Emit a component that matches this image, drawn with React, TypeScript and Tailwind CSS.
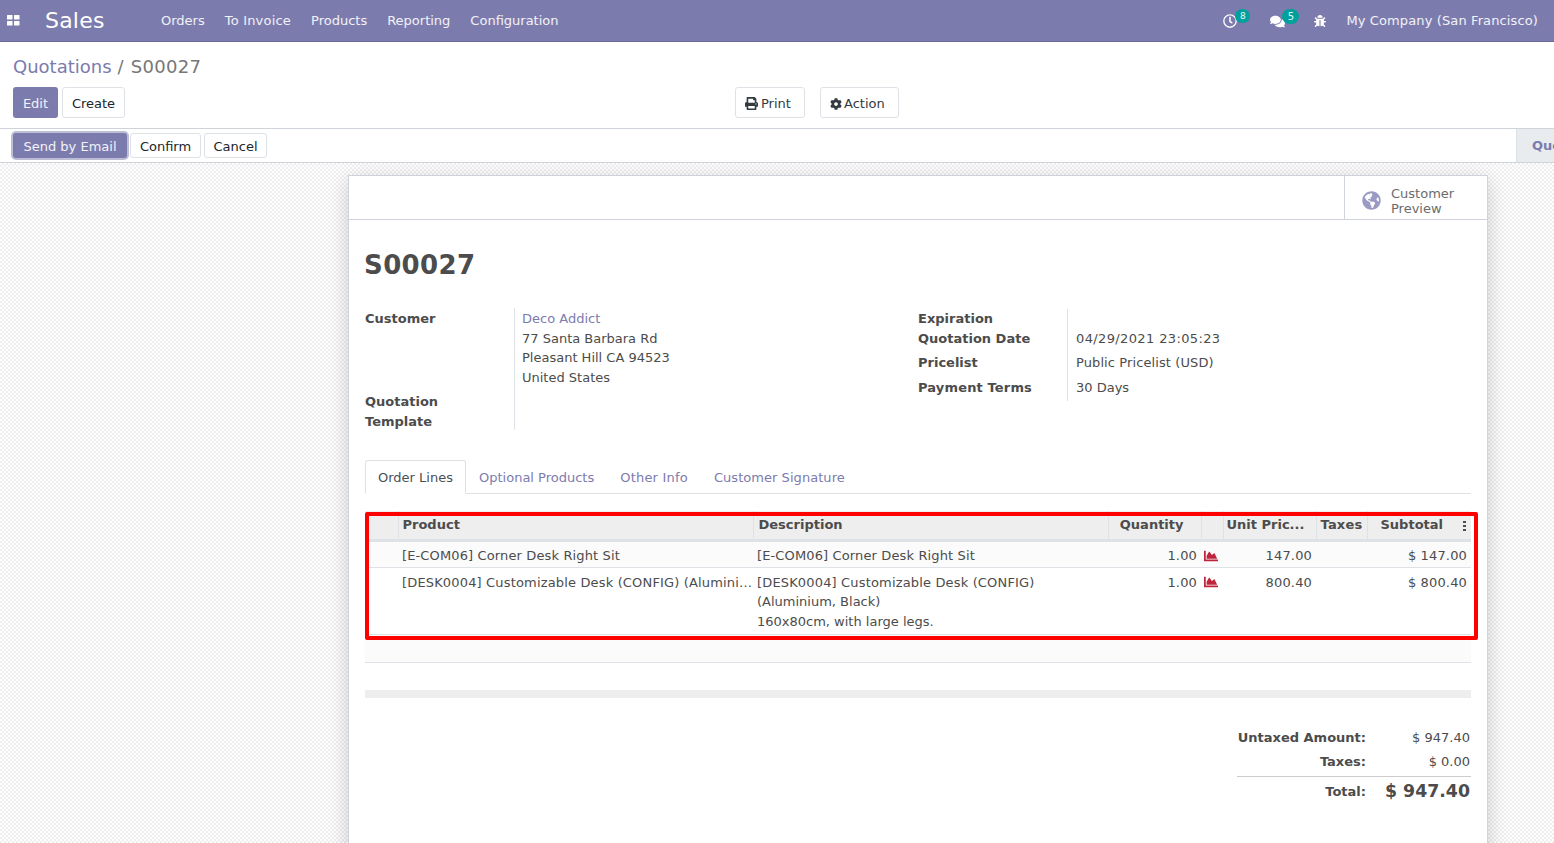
import { FaBug, FaChartArea, FaCog, FaComments, FaGlobeAmericas, FaPrint, FaRegClock } from "react-icons/fa";

const font = "font-['DejaVu_Sans',sans-serif]";

function TopBar() {
  return (
    <div className="h-[42px] bg-[#7c7bad] border-b border-[#6a699c] flex items-center text-white">
      <svg width="13" height="11" viewBox="0 0 13 11" className="ml-[7px]" fill="white">
        <rect x="0" y="0" width="5.500" height="4.500" rx="0.500" />
        <rect x="7" y="0" width="5.500" height="4.500" rx="0.500" />
        <rect x="0" y="6" width="5.500" height="4.500" rx="0.500" />
        <rect x="7" y="6" width="5.500" height="4.500" rx="0.500" />
      </svg>
      <span className="ml-[25px] w-[116px] text-[22px] leading-none tracking-[0.2px]">Sales</span>
      <div className="flex gap-5 text-[13px] text-white/90">
        <span>Orders</span>
        <span className="tracking-[0.2px]">To Invoice</span>
        <span>Products</span>
        <span>Reporting</span>
        <span>Configuration</span>
      </div>
      <div className="ml-auto flex items-center mr-[16px] text-[13px] text-white/90">
        <div className="relative w-[14px] h-[14px] mr-[33px]">
          <FaRegClock size={14} color="white" />
          <span className="absolute left-[12px] -top-[5px] w-[15px] h-[14px] rounded-full bg-[#00a09d] text-[9px] leading-[14px] text-center">8</span>
        </div>
        <div className="relative w-[15px] h-[14px] mr-[29px]">
          <FaComments size={15} color="white" />
          <span className="absolute left-[12px] -top-[5px] w-[17px] h-[15px] rounded-full bg-[#00a09d] text-[10px] leading-[15px] text-center">5</span>
        </div>
        <FaBug size={12} color="white" className="mr-[20px]" />
        <span className="tracking-[0.12px]">My Company (San Francisco)</span>
      </div>
    </div>
  );
}

function ControlPanel() {
  return (
    <div className="h-[87px] border-b border-[#ced4da] pl-[13px] pr-[16px]">
      <div className="flex pt-[12px] text-[18px] leading-[26px] text-[#777]">
        <span className="text-[#7c7bad]">Quotations</span>
        <span className="ml-[6px] mr-[7px]">/</span>
        <span className="tracking-[0.33px]">S00027</span>
      </div>
      <div className="mt-[7px] flex h-[31px] gap-1">
        <button className="h-[31px] w-[45px] rounded-[3px] bg-[#7c7bad] pt-[2px] text-[13px] text-white/90">Edit</button>
        <button className="h-[31px] w-[63px] rounded-[3px] border border-[#dee2e6] bg-white pt-[2px] text-[13px] text-[#212529]">Create</button>
        <div className="ml-[606px] flex gap-[15px]">
          <button className="flex h-[31px] w-[70px] items-center gap-[3px] rounded-[3px] border border-[#dee2e6] bg-white pl-[9px] pt-[2px] text-[13px] text-[#343a40]">
            <FaPrint size={13} />
            Print
          </button>
          <button className="flex h-[31px] w-[79px] items-center gap-[2px] rounded-[3px] border border-[#dee2e6] bg-white pl-[9px] pt-[2px] text-[13px] text-[#343a40]">
            <FaCog size={12} />
            Action
          </button>
        </div>
      </div>
    </div>
  );
}

function StatusBar() {
  return (
    <div className="relative flex h-[34px] items-center border-b border-[#ced4da] pl-[13px]">
      <button className="h-[25px] w-[114px] rounded-[3px] bg-[#7c7bad] pt-[2px] text-[13px] text-white/90 shadow-[0_0_0_2px_#bdbdd6]">Send by Email</button>
      <button className="ml-[3px] h-[25px] w-[71px] rounded-[3px] border border-[#dee2e6] bg-white pt-[2px] text-[13px] text-[#212529]">Confirm</button>
      <button className="ml-[3px] h-[25px] w-[63px] rounded-[3px] border border-[#dee2e6] bg-white pt-[2px] text-[13px] text-[#212529]">Cancel</button>
      <div className="ml-auto h-full w-[38px] overflow-hidden whitespace-nowrap border-l border-[#dee2e6] bg-[#e9ecef] pl-[15px] text-[13px] font-bold leading-[34px] text-[#7c7bad]">
        Quotation
      </div>
    </div>
  );
}

function Row({ label, labelClass, children }: { label: string; labelClass?: string; children?: React.ReactNode }) {
  return (
    <div className="flex h-full">
      <div className={`w-[149px] shrink-0 font-bold text-[#4c4c4c] ${labelClass ?? ""}`}>{label}</div>
      <div className="h-full border-l border-[#dee2e6] pl-[8px]">{children}</div>
    </div>
  );
}

function OrderTable() {
  const th = "border-r border-[#dee2e6] h-[29px] text-left font-bold align-middle";
  return (
    <div className="relative mt-[17px]">
      <table className="w-[1106px] table-fixed border-collapse text-[13px] text-[#4c4c4c]">
        <colgroup>
          <col className="w-[33px]" />
          <col className="w-[355px]" />
          <col className="w-[355px]" />
          <col className="w-[93px]" />
          <col className="w-[22px]" />
          <col className="w-[93px]" />
          <col className="w-[51px]" />
          <col className="w-[104px]" />
        </colgroup>
        <thead>
          <tr className="border-b-[3px] border-[#dee2e6] bg-[#eeeeee]">
            <th className={th}></th>
            <th className={th + " pl-[4px]"}>Product</th>
            <th className={th + " pl-[5px]"}>Description</th>
            <th className="h-[29px] border-r border-[#dee2e6] pr-[17px] text-right font-bold">Quantity</th>
            <th className={th}></th>
            <th className={th + " pl-[3px]"}>Unit Pric...</th>
            <th className={th + " pl-[4px] tracking-[0.2px]"}>Taxes</th>
            <th className="relative h-[29px] pl-[13px] text-left font-bold">
              Subtotal
              <span className="absolute right-[5px] top-[10px] flex flex-col gap-[2px]">
                <span className="h-[2px] w-[3px] bg-[#4c4c4c]" />
                <span className="h-[2px] w-[3px] bg-[#4c4c4c]" />
                <span className="h-[2px] w-[3px] bg-[#4c4c4c]" />
              </span>
            </th>
          </tr>
        </thead>
        <tbody>
          <tr className="h-[27px] border-b border-[#dee2e6] bg-[#fbfbfb]">
            <td></td>
            <td className="pl-[4px] pt-[4px] tracking-[0.13px]">[E-COM06] Corner Desk Right Sit</td>
            <td className="pl-[4px] pt-[4px] tracking-[0.13px]">[E-COM06] Corner Desk Right Sit</td>
            <td className="pr-[4px] pt-[4px] text-right tracking-[0.15px]">1.00</td>
            <td className="pl-[3px] pt-[4px]"><FaChartArea size={14} color="#c0243c" className="block" /></td>
            <td className="pr-[4px] pt-[4px] text-right tracking-[0.15px]">147.00</td>
            <td></td>
            <td className="pr-[4px] pt-[4px] text-right tracking-[0.15px]">$ 147.00</td>
          </tr>
          <tr className="h-[67px] border-b border-[#dee2e6] align-top">
            <td></td>
            <td className="pl-[4px] pt-[5px]"><div className="truncate tracking-[0.16px]">[DESK0004] Customizable Desk (CONFIG) (Aluminium, Black)</div></td>
            <td className="pl-[4px] pt-[5px] leading-[19.500px]">
              <div className="tracking-[0.16px]">[DESK0004] Customizable Desk (CONFIG)</div>
              <div>(Aluminium, Black)</div>
              <div>160x80cm, with large legs.</div>
            </td>
            <td className="pr-[4px] pt-[5px] text-right tracking-[0.15px]">1.00</td>
            <td className="pl-[3px] pt-[7px]"><FaChartArea size={14} color="#c0243c" className="block" /></td>
            <td className="pr-[4px] pt-[5px] text-right tracking-[0.15px]">800.40</td>
            <td></td>
            <td className="pr-[4px] pt-[5px] text-right tracking-[0.15px]">$ 800.40</td>
          </tr>
        </tbody>
      </table>
      <div className="h-[28px] border-b border-[#dee2e6] bg-[#fbfbfb]" />
      <div className="mt-[27px] h-[8px] bg-[#eeeeee]" />
      <div className="pointer-events-none absolute left-0 top-[1px] h-[128px] w-[1113px] rounded-[2px] border-4 border-[#ff0000]" />
    </div>
  );
}

export default function App() {
  return (
    <div className={`${font} h-[843px] overflow-hidden bg-white text-[13px] leading-[19.500px]`}>
      <TopBar />
      <ControlPanel />
      <StatusBar />
      <div className="h-[680px] bg-[repeating-conic-gradient(#eeeeee_0%_25%,#ffffff_0%_50%)] bg-[length:4px_4px] pt-[12px]">
        <div className="ml-[348px] h-[700px] w-[1140px] border border-[#ced4da] bg-white shadow-[0_5px_20px_-1px_rgba(0,0,0,0.2)]">
          <div className="flex h-[44px] justify-end border-b border-[#ced4da]">
            <div className="flex w-[143px] items-center border-l border-[#ced4da] pl-[17px] pt-[6px]">
              <FaGlobeAmericas size={19} color="#9b9ac4" className="mr-[10px] shrink-0" />
              <span className="text-[13px] leading-[15px] text-[#6c6c6c]">Customer<br />Preview</span>
            </div>
          </div>
          <div className="px-4">
            <h1 className="-ml-[1px] mt-[27px] text-[26px] font-bold leading-[36px] tracking-[0.4px] text-[#4c4c4c]">S00027</h1>
            <div className="mt-[25px] flex h-[122px] text-[#4c4c4c]">
              <div className="flex w-[553px] shrink-0">
                <div className="w-[149px] shrink-0 font-bold">
                  <div className="mt-[1px]">Customer</div>
                  <div className="mt-[63px]">Quotation</div>
                  <div className="mt-[1px]">Template</div>
                </div>
                <div className="h-[122px] border-l border-[#dee2e6] pl-[7px] pt-[1px]">
                  <div className="text-[#7c7bad]">Deco Addict</div>
                  <div>77 Santa Barbara Rd</div>
                  <div>Pleasant Hill CA 94523</div>
                  <div>United States</div>
                </div>
              </div>
              <div className="flex flex-col">
                <div className="h-[21px] pt-[1px]"><Row label="Expiration" /></div>
                <div className="h-[24px]"><Row label="Quotation Date"><span className="tracking-[0.37px]">04/29/2021 23:05:23</span></Row></div>
                <div className="h-[25px]"><Row label="Pricelist"><span className="tracking-[0.1px]">Public Pricelist (USD)</span></Row></div>
                <div className="h-[23px]"><Row label="Payment Terms" labelClass="tracking-[0.15px]">30 Days</Row></div>
              </div>
            </div>
            <div className="mt-[30px] flex h-[34px] border-b border-[#dee2e6] text-[#7c7bad]">
              <div className="-mb-px flex w-[101px] items-center justify-center rounded-t-[3px] border border-[#dee2e6] border-b-white bg-white pt-[1px] text-[#495057]">Order Lines</div>
              <div className="ml-[13px] pt-[8px]">Optional Products</div>
              <div className="ml-[26px] pt-[8px] tracking-[0.2px]">Other Info</div>
              <div className="ml-[26px] pt-[8px] tracking-[0.05px]">Customer Signature</div>
            </div>
            <OrderTable />
            <div className="ml-auto mt-[28px] w-[234px] text-[#4c4c4c]">
              <div className="flex h-[24px] items-center justify-between pr-[1px]">
                <span className="w-[129px] text-right font-bold">Untaxed Amount:</span>
                <span>$ 947.40</span>
              </div>
              <div className="flex h-[24px] items-center justify-between pr-[1px]">
                <span className="w-[129px] text-right font-bold">Taxes:</span>
                <span>$ 0.00</span>
              </div>
              <div className="mt-[2px] flex h-[32px] items-center justify-between border-t border-[#cccccc] pr-[1px]">
                <span className="w-[129px] text-right font-bold">Total:</span>
                <span className="text-[17.330px] font-bold">$ 947.40</span>
              </div>
            </div>
          </div>
        </div>
      </div>
    </div>
  );
}
